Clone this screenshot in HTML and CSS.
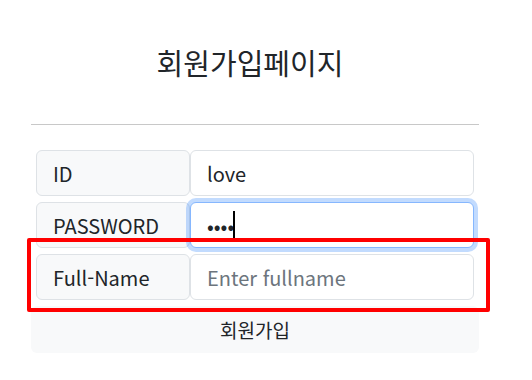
FILE: index.html
```html
<!DOCTYPE html>
<html lang="ko">
  <head>
    <meta charset="UTF-8" />
    <meta name="viewport" content="width=device-width, initial-scale=1.0" />
    <title>회원가입</title>
    <link rel="stylesheet" href="styles.css">
  </head>
  <body>
    <div class="page">
      <h1 class="title">회원가입페이지</h1>
      <hr class="divider" />
      <form class="join-form">
        <div class="fields">
          <div class="input-row">
            <span class="input-label">ID</span>
            <input class="input-box" type="text" value="love" />
          </div>
          <div class="input-row">
            <span class="input-label">PASSWORD</span>
            <div class="input-wrap">
              <input class="input-box focused" type="password" value="love" />
              <span class="caret"></span>
            </div>
          </div>
          <div class="input-row">
            <span class="input-label">Full-Name</span>
            <input class="input-box" type="text" placeholder="Enter fullname" />
          </div>
          <!-- annotation box drawn over the last row -->
          <div class="highlight"></div>
        </div>
        <button class="join-btn" type="button">회원가입</button>
      </form>
    </div>
  </body>
</html>
```

FILE: styles.css
```css
body {
  margin: 0;
  font-family: "Noto Sans CJK KR", "Noto Sans", sans-serif;
  color: #212529;
  background-color: #fff;
}
.page {
  width: 448px;
  margin-left: 31px;
  padding-top: 40px;
}
.title {
  font-size: 29px;
  font-weight: 400;
  line-height: 44px;
  text-align: center;
  margin: 0 0 40px 0;
  padding-right: 10px;
}
.divider {
  border: none;
  border-top: 1px solid #c8c8c8;
  margin: 0 0 25px 0;
}
.fields {
  position: relative;
  display: flex;
  flex-direction: column;
  gap: 6px;
  padding: 0 5px;
}
.input-row {
  display: flex;
  height: 46px;
}
.input-label {
  display: flex;
  align-items: center;
  box-sizing: border-box;
  width: 154px;
  padding: 0 16px;
  font-size: 20px;
  background-color: #f8f9fa;
  border: 1px solid #dee2e6;
  border-radius: 6px;
}
.input-wrap {
  position: relative;
  flex: 1;
  display: flex;
}
.input-box {
  flex: 1;
  min-width: 0;
  box-sizing: border-box;
  height: 46px;
  padding: 0 16px;
  font-family: inherit;
  font-size: 20px;
  color: #212529;
  background-color: #fff;
  border: 1px solid #dee2e6;
  border-radius: 6px;
  outline: none;
}
.input-box::placeholder {
  color: #6c757d;
}
.focused {
  border-color: #86b7fe;
  box-shadow: 0 0 0 4px rgba(13, 110, 253, 0.25);
}
.caret {
  position: absolute;
  left: 43px;
  top: 9px;
  width: 2px;
  height: 28px;
  background-color: #000;
}
.highlight {
  position: absolute;
  left: -4px;
  top: 88px;
  width: 455px;
  height: 66px;
  border: 4px solid #ff0000;
  border-radius: 2px;
  pointer-events: none;
}
.join-btn {
  display: block;
  width: 100%;
  height: 47px;
  margin-top: 6px;
  font-family: inherit;
  font-size: 19px;
  color: #212529;
  background-color: #f8f9fa;
  border: none;
  border-radius: 6px;
}
```
